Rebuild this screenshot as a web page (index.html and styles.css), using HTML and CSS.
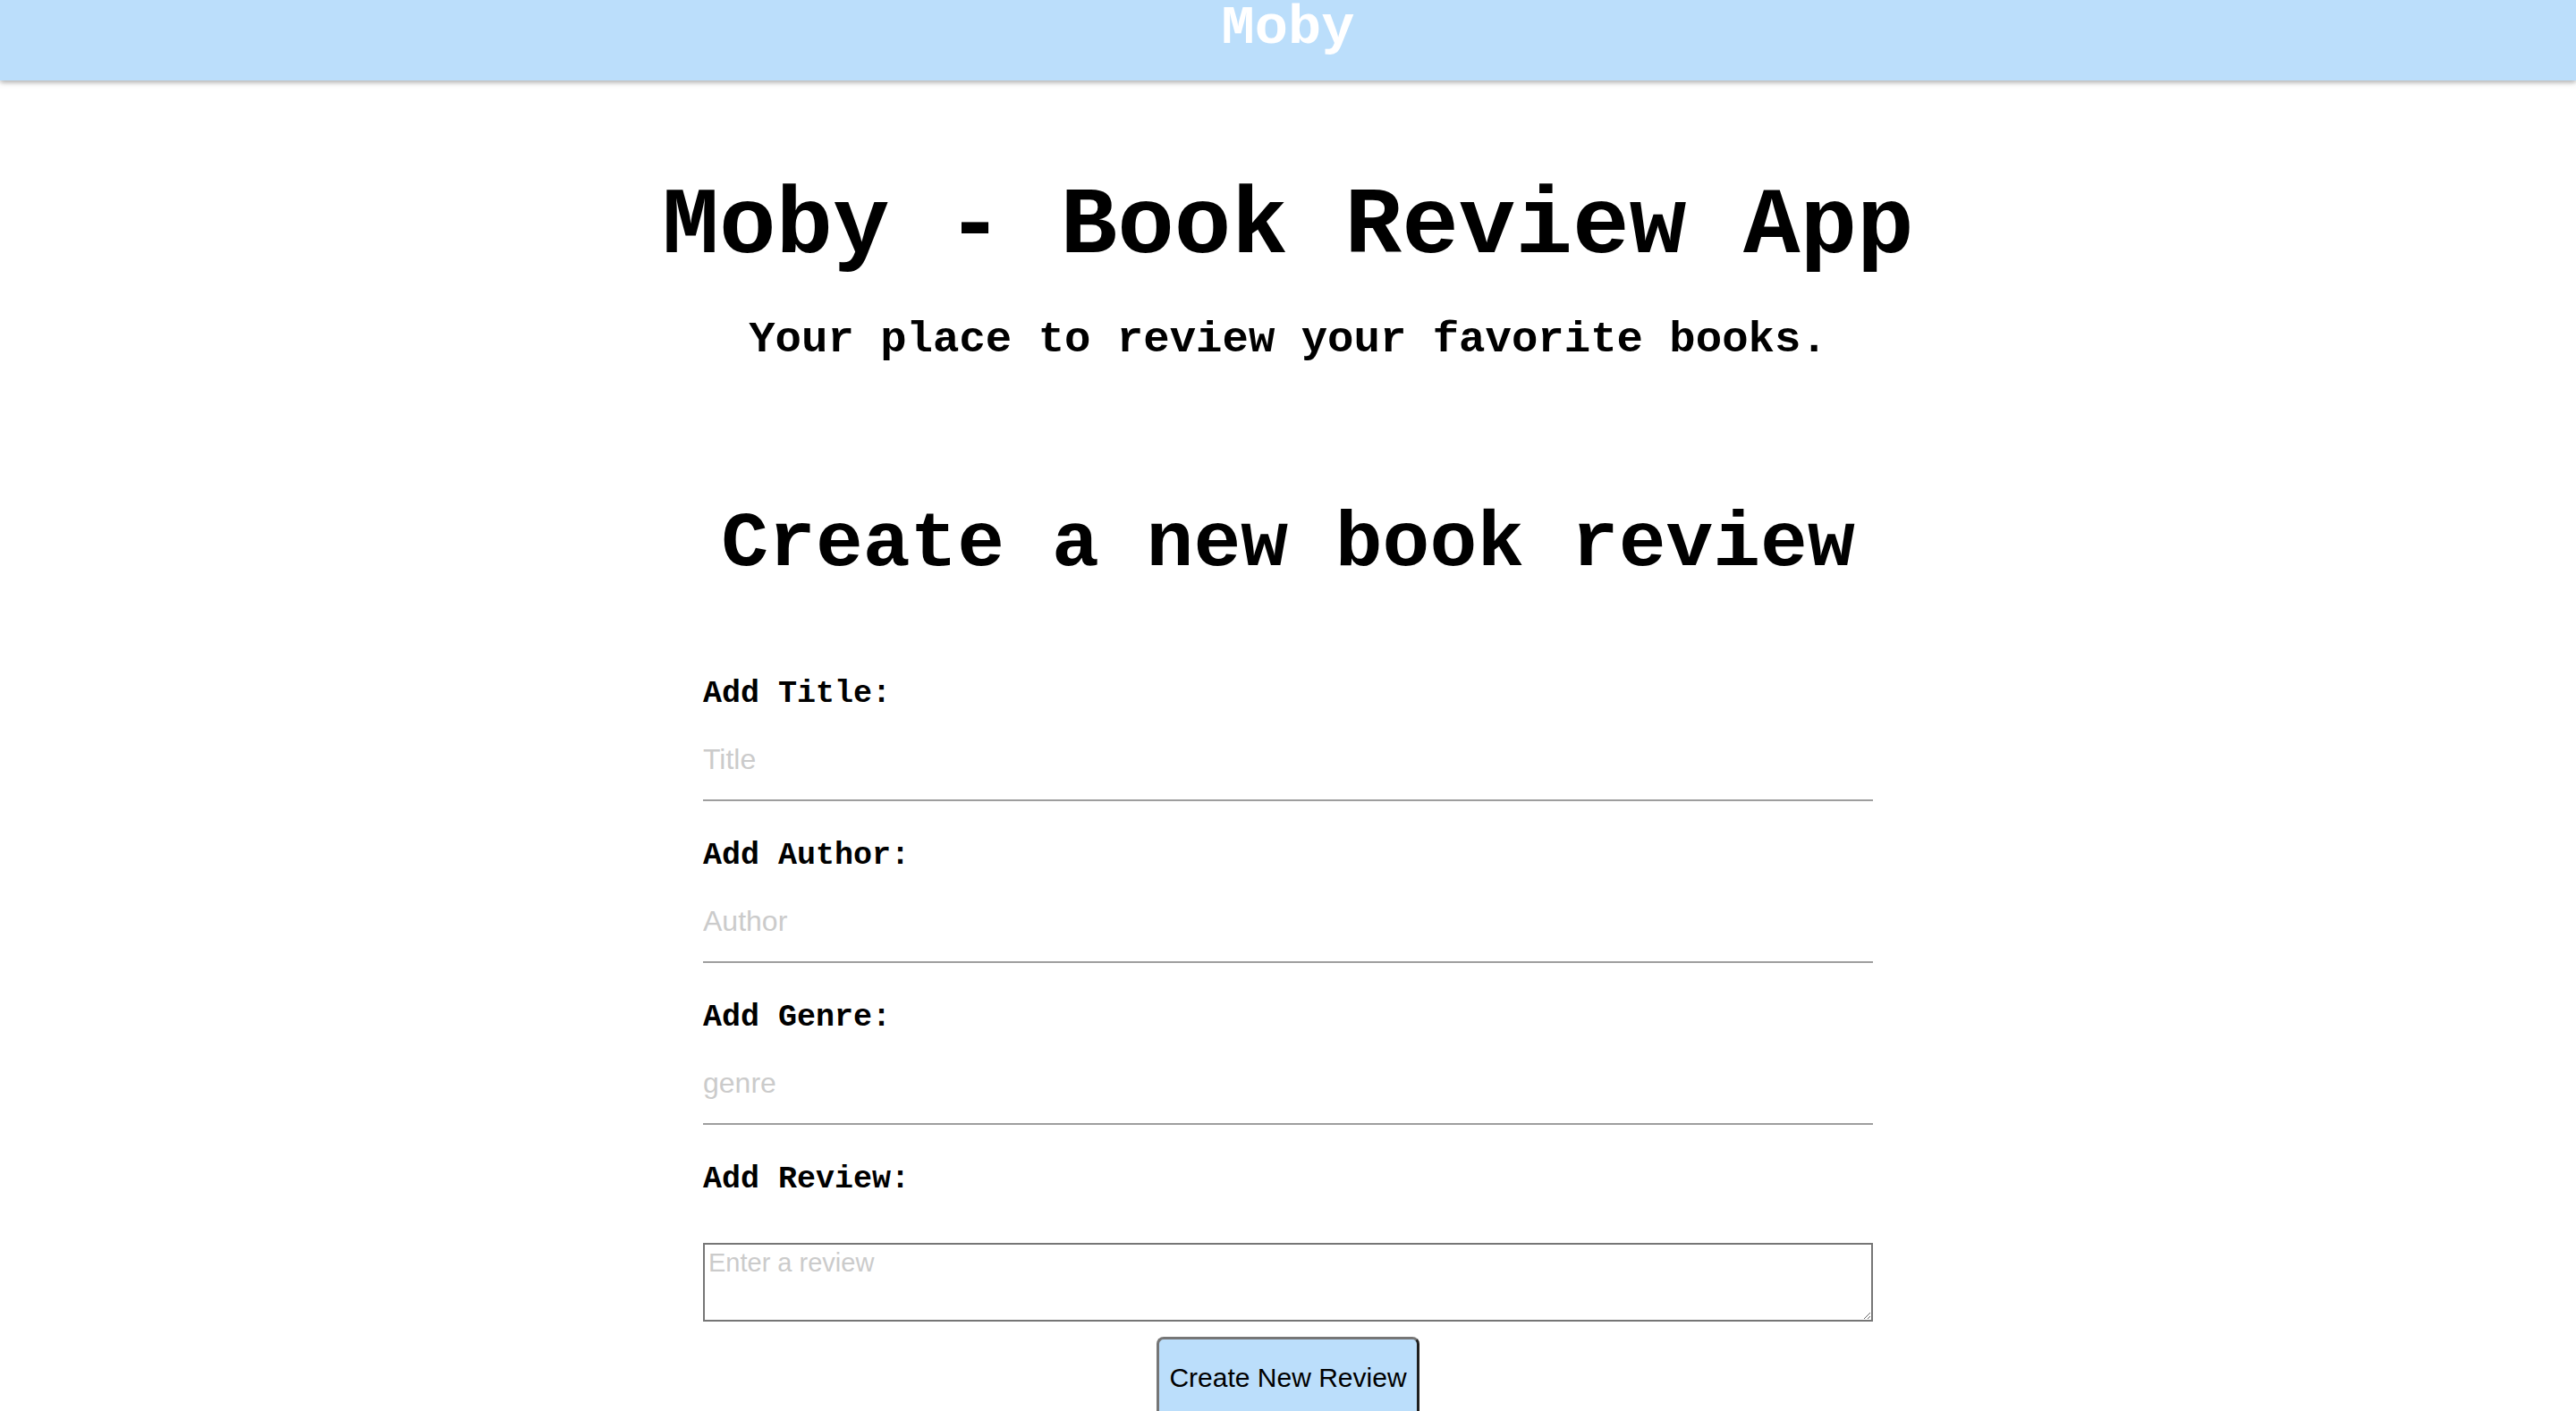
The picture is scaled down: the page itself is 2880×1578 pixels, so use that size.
FILE: index.html
```html
<!DOCTYPE html>
<html lang="en">
<head>
<meta charset="utf-8">
<title>Moby - Book Review App</title>
<link rel="stylesheet" href="styles.css">
</head>
<body>
<header class="topbar">
  <div class="brand">Moby</div>
</header>
<main class="page">
  <h1 class="app-title">Moby - Book Review App</h1>
  <p class="tagline">Your place to review your favorite books.</p>
  <h2 class="section-title">Create a new book review</h2>
  <form class="review-form">
    <div class="field">
      <label class="field-label" for="title">Add Title:</label>
      <input class="field-input" id="title" type="text" placeholder="Title">
    </div>
    <div class="field">
      <label class="field-label" for="author">Add Author:</label>
      <input class="field-input" id="author" type="text" placeholder="Author">
    </div>
    <div class="field">
      <label class="field-label" for="genre">Add Genre:</label>
      <input class="field-input" id="genre" type="text" placeholder="genre">
    </div>
    <div class="field">
      <label class="field-label" for="review">Add Review:</label>
      <textarea class="field-textarea" id="review" placeholder="Enter a review"></textarea>
    </div>
    <button class="submit-btn" type="button">Create New Review</button>
  </form>
</main>
</body>
</html>
```

FILE: styles.css
```css
html, body {
  margin: 0;
  padding: 0;
  background: #ffffff;
}

body {
  font-family: "Courier New", "Liberation Mono", monospace;
  color: #000000;
}

.topbar {
  height: 90px;
  background: #bbdefb;
  box-shadow: 0 2px 6px rgba(0, 0, 0, 0.35);
  display: flex;
  justify-content: center;
  align-items: flex-start;
}

.brand {
  font-family: "Courier New", "Liberation Mono", monospace;
  font-weight: bold;
  font-size: 62px;
  line-height: 64px;
  color: #ffffff;
}

.page {
  display: flex;
  flex-direction: column;
  align-items: center;
  padding-top: 103px;
}

.app-title {
  margin: 0;
  font-size: 106px;
  line-height: 122px;
  font-weight: bold;
  text-align: center;
}

.tagline {
  margin: 37px 0 0;
  font-size: 49px;
  line-height: 56px;
  font-weight: bold;
  text-align: center;
}

.section-title {
  margin: 150px 0 0;
  font-size: 88px;
  line-height: 101px;
  font-weight: bold;
  text-align: center;
}

.review-form {
  width: 1308px;
  margin-top: 97px;
  display: flex;
  flex-direction: column;
  gap: 41px;
}

.field {
  display: flex;
  flex-direction: column;
}

.field-label {
  font-size: 35px;
  line-height: 40px;
  font-weight: bold;
}

.field-input {
  display: block;
  width: 100%;
  box-sizing: border-box;
  border: none;
  border-bottom: 2px solid #9e9e9e;
  padding: 35px 0 26px;
  margin: 0;
  font-family: "Liberation Sans", Arial, sans-serif;
  font-size: 32px;
  line-height: 37px;
  background: transparent;
  outline: none;
  color: #000;
}

.field-input::placeholder,
.field-textarea::placeholder {
  color: #cbcbcb;
}

.field-textarea {
  display: block;
  width: 100%;
  height: 88px;
  box-sizing: border-box;
  margin: 51px 0 0;
  border: 2px solid #767676;
  border-radius: 0;
  padding: 4px;
  font-family: "Liberation Sans", Arial, sans-serif;
  font-size: 29px;
  line-height: 33px;
  outline: none;
}

.submit-btn {
  align-self: center;
  margin-top: -24px;
  padding: 25px 11px;
  font-family: "Liberation Sans", Arial, sans-serif;
  font-size: 30px;
  line-height: 35px;
  color: #000;
  background: #bbdefb;
  border-style: solid;
  border-width: 3px;
  border-color: #767676 #1f1f1f #1f1f1f #767676;
  border-radius: 8px;
  cursor: pointer;
}
```
